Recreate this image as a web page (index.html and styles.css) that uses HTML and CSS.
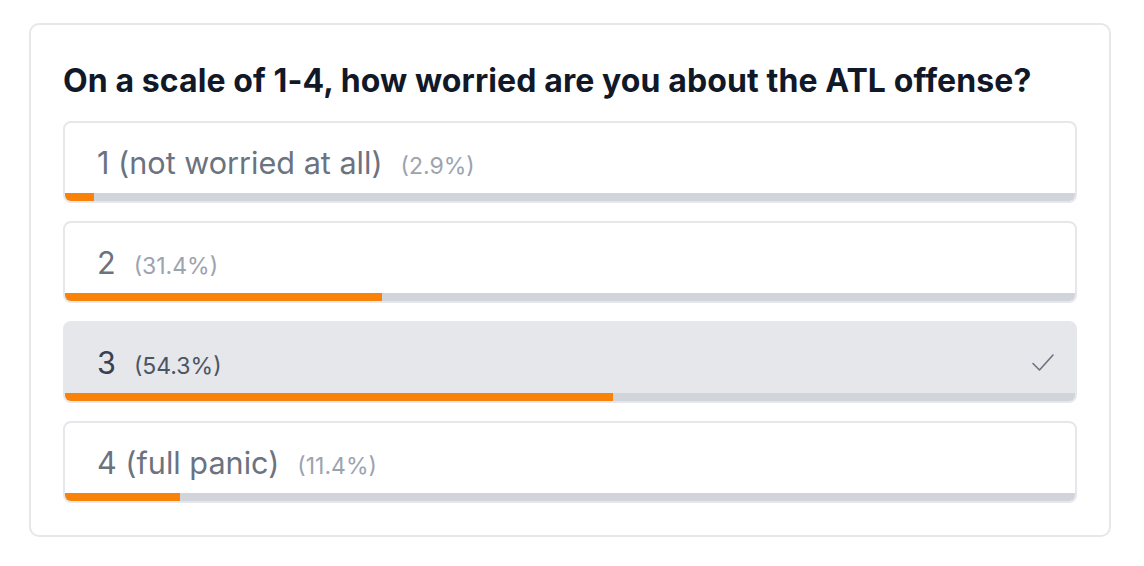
FILE: index.html
```html
<!DOCTYPE html>
<html lang="en">
<head>
<meta charset="utf-8">
<title>Poll</title>
<link rel="stylesheet" href="styles.css">
</head>
<body>
<div class="card">
  <h1 class="question">On a scale of 1-4, how worried are you about the ATL offense?</h1>
  <div class="options">
    <div class="option">
      <div class="row"><span class="label">1 (not worried at all)</span><span class="pct">(2.9%)</span></div>
      <div class="track"><div class="fill" style="width:2.9%"></div></div>
    </div>
    <div class="option">
      <div class="row"><span class="label">2</span><span class="pct">(31.4%)</span></div>
      <div class="track"><div class="fill" style="width:31.4%"></div></div>
    </div>
    <div class="option selected">
      <div class="row"><span class="label">3</span><span class="pct">(54.3%)</span>
        <svg class="check" viewBox="0 0 24 24" width="24" height="24" aria-hidden="true"><path d="M2 12.5 L8.5 19 L22 4" fill="none" stroke="currentColor" stroke-width="1.6" stroke-linecap="round" stroke-linejoin="round"/></svg>
      </div>
      <div class="track"><div class="fill" style="width:54.3%"></div></div>
    </div>
    <div class="option">
      <div class="row"><span class="label">4 (full panic)</span><span class="pct">(11.4%)</span></div>
      <div class="track"><div class="fill" style="width:11.4%"></div></div>
    </div>
  </div>
</div>
</body>
</html>
```
FILE: styles.css
```css
* { box-sizing: border-box; }
html, body { margin: 0; background: #ffffff; }
body {
  padding: 23px 33px 29px 29px;
  font-family: Inter, "Noto Sans", "Liberation Sans", sans-serif;
}
.card {
  border: 2px solid #e5e7eb;
  border-radius: 10px;
  padding: 32px;
}
.question {
  margin: 4px 0 20px;
  font-size: 32px;
  line-height: 40px;
  font-weight: 700;
  color: #111827;
  letter-spacing: 0.1px;
}
.options {
  display: flex;
  flex-direction: column;
  gap: 18px;
}
.option {
  border: 2px solid #e5e7eb;
  border-radius: 8px;
  overflow: hidden;
  background: #ffffff;
}
.option.selected {
  background: #e5e7eb;
}
.row {
  display: flex;
  align-items: baseline;
  padding: 20px 20px 10px 32px;
  height: 70px;
}
.label {
  font-size: 30.6px;
  line-height: 40px;
  color: #6b7280;
}
.pct {
  margin-left: 18px;
  font-size: 23px;
  color: #9ca3af;
}
.selected .label { color: #374151; }
.selected .pct { color: #4b5563; }
.check {
  margin-left: auto;
  align-self: center;
  color: #6b7280;
}
.track {
  height: 8px;
  background: #d1d5db;
}
.fill {
  height: 100%;
  background: #f98209;
}
```
